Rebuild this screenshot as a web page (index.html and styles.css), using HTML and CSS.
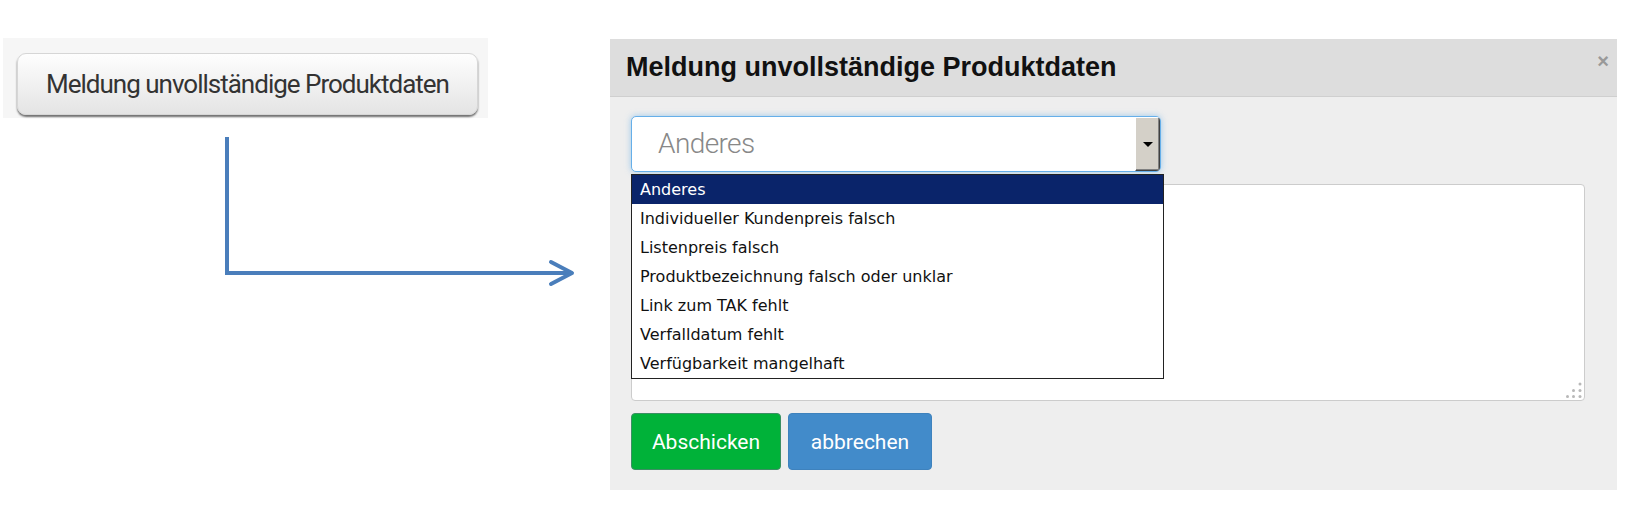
FILE: index.html
```html
<!DOCTYPE html>
<html lang="de">

<head>
    <meta charset="UTF-8">
    <meta name="viewport" content="width=device-width, initial-scale=1.0">
    <title>Meldung unvollständige Produktdaten</title>
    <link rel="stylesheet" href="styles.css">
</head>

<body>
    <div class="stage">
        <!-- 왼쪽: 상품 페이지의 버튼 -->
        <div class="intro">
            <div class="intro-panel">
                <button type="button" class="btn-report">Meldung unvollständige Produktdaten</button>
            </div>
            <svg class="flow-arrow" width="360" height="160" viewBox="0 0 360 160">
                <path d="M7 7 V143 H352" fill="none" stroke="#4a7ebb" stroke-width="4" />
                <path d="M331 132 L352 143 L331 154" fill="none" stroke="#4a7ebb" stroke-width="4"
                    stroke-linecap="round" stroke-linejoin="round" />
            </svg>
        </div>

        <!-- 오른쪽: 모달 -->
        <div class="modal">
            <div class="modal-header">
                <h4 class="modal-title">Meldung unvollständige Produktdaten</h4>
                <button type="button" class="btn-close">×</button>
            </div>
            <div class="modal-body">
                <div class="select-wrap">
                    <div class="select-box">
                        <span class="select-value">Anderes</span>
                        <span class="select-arrow"></span>
                    </div>
                    <ul class="option-list">
                        <li class="is-selected">Anderes</li>
                        <li>Individueller Kundenpreis falsch</li>
                        <li>Listenpreis falsch</li>
                        <li>Produktbezeichnung falsch oder unklar</li>
                        <li>Link zum TAK fehlt</li>
                        <li>Verfalldatum fehlt</li>
                        <li>Verfügbarkeit mangelhaft</li>
                    </ul>
                </div>
                <div class="note-field">
                    <textarea class="note"></textarea>
                    <svg class="grip" width="16" height="16" viewBox="0 0 16 16">
                        <circle cx="14" cy="2" r="1.5" />
                        <circle cx="7.5" cy="8.5" r="1.5" />
                        <circle cx="14" cy="8.5" r="1.5" />
                        <circle cx="1.5" cy="14.5" r="1.5" />
                        <circle cx="7.5" cy="14.5" r="1.5" />
                        <circle cx="14" cy="14.5" r="1.5" />
                    </svg>
                </div>
                <div class="form-actions">
                    <button type="button" class="btn btn-submit">Abschicken</button>
                    <button type="button" class="btn btn-cancel">abbrechen</button>
                </div>
            </div>
        </div>
    </div>
</body>

</html>
```

FILE: styles.css
```css
body {
    margin: 0;
    background: #fff;
    font-family: Roboto, "Liberation Sans", sans-serif;
}

ul,
li {
    list-style: none;
    margin: 0;
    padding: 0;
}

button {
    cursor: pointer;
    font-family: inherit;
}

.stage {
    display: flex;
    align-items: flex-start;
    padding: 38px 0 0 3px;
}

/* 왼쪽 영역 */
.intro {
    width: 607px;
    flex-shrink: 0;
}

.intro-panel {
    box-sizing: border-box;
    width: 485px;
    height: 80px;
    padding: 15px 0 0 14px;
    background: #f6f6f6;
}

.btn-report {
    width: 461px;
    height: 62px;
    border: 1px solid #d6d6d6;
    border-radius: 9px;
    background: linear-gradient(#fefefe, #e4e4e4);
    box-shadow: 0 2px 2px rgba(0, 0, 0, 0.55);
    color: #333;
    font-size: 26px;
    letter-spacing: -1px;
}

.flow-arrow {
    display: block;
    margin: 12px 0 0 217px;
}

/* 모달 */
.modal {
    width: 1007px;
    margin-top: 1px;
}

.modal-header {
    box-sizing: border-box;
    height: 58px;
    display: flex;
    justify-content: space-between;
    align-items: center;
    padding: 0 8px 0 16px;
    background: #dddddd;
    border-bottom: 1px solid #cfcfcf;
}

.modal-title {
    margin: 0;
    font: 700 27px "Liberation Sans", Arial, sans-serif;
    color: #111;
}

.btn-close {
    align-self: flex-start;
    margin-top: 12px;
    padding: 0;
    border: none;
    background: none;
    font: 700 20px/1 "Liberation Sans", Arial, sans-serif;
    color: #999;
}

.modal-body {
    padding: 19px 32px 20px 21px;
    background: #eeeeee;
}

/* 셀렉트 박스 */
.select-wrap {
    position: relative;
    width: 530px;
    height: 56px;
}

.select-box {
    box-sizing: border-box;
    height: 56px;
    display: flex;
    border: 1px solid #66afe9;
    border-radius: 5px;
    background: #fff;
    box-shadow: 0 0 6px rgba(102, 175, 233, 0.6);
    overflow: hidden;
}

.select-value {
    flex: 1;
    padding-left: 26px;
    line-height: 54px;
    font-size: 28px;
    font-weight: 300;
    letter-spacing: -0.6px;
    color: #888;
}

.select-arrow {
    box-sizing: border-box;
    width: 25px;
    display: flex;
    align-items: center;
    justify-content: center;
    background: #d4d0c8;
    border: 1px solid;
    border-color: #fff #404040 #404040 #fff;
    box-shadow: inset -1px -1px #808080;
}

/* 화살표 모양 */
.select-arrow::after {
    content: "";
    border-top: 5px solid #000;
    border-left: 5px solid transparent;
    border-right: 5px solid transparent;
}

/* 펼쳐진 목록 */
.option-list {
    position: absolute;
    top: 58px;
    left: 0;
    z-index: 1;
    width: 531px;
    border: 1px solid #222;
    background: #fff;
}

.option-list li {
    height: 29px;
    line-height: 29px;
    padding-left: 8px;
    font-family: "DejaVu Sans", Verdana, sans-serif;
    font-size: 16px;
    color: #111;
}

.option-list li.is-selected {
    background: #0a246a;
    color: #fff;
}

/* 텍스트 영역 */
.note-field {
    position: relative;
    width: 954px;
    margin-top: 12px;
}

.note {
    display: block;
    box-sizing: border-box;
    width: 954px;
    height: 217px;
    border: 1px solid #cccccc;
    border-radius: 4px;
    background: #fff;
    resize: none;
}

.grip {
    position: absolute;
    right: 3px;
    bottom: 3px;
    fill: #b8b8b8;
}

/* 버튼 */
.form-actions {
    display: flex;
    gap: 7px;
    margin-top: 12px;
}

.btn {
    height: 57px;
    border: 1px solid;
    border-radius: 4px;
    color: #fff;
    font-size: 21px;
}

.btn-submit {
    width: 150px;
    background: #00b239;
    border-color: #3b8f63;
}

.btn-cancel {
    width: 144px;
    background: #428bca;
    border-color: #3e82bd;
}
```
